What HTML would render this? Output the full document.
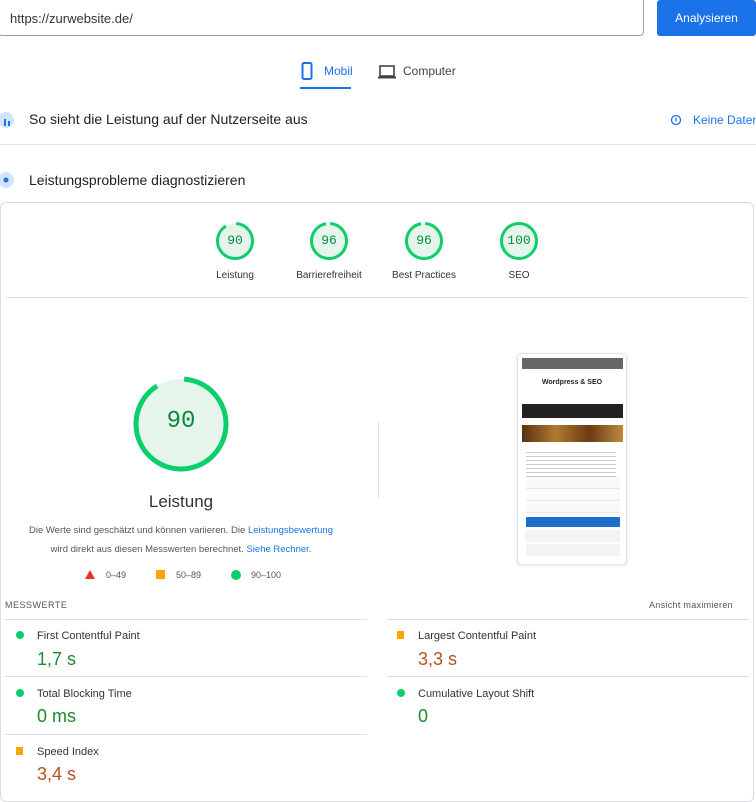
<!DOCTYPE html>
<html><head><meta charset="utf-8"><style>
*{box-sizing:border-box;margin:0;padding:0}
body{width:756px;height:779px;overflow:hidden;background:#fff;font-family:"Liberation Sans",sans-serif;color:#202124;position:relative}
.a{position:absolute;white-space:nowrap}
.mono{font-family:"Liberation Mono",monospace}
.lbl{font-size:11px;color:#333;transform:translateX(-50%)}
.m{font-size:11px;color:#333}
.v{font-size:18px}
.hr{height:1px;background:#e0e0e0}
</style></head><body>
<div class="a" style="left:-2px;top:-4px;width:646px;height:40px;border:1px solid #9aa0a6;border-radius:4px"></div>
<div class="a" style="left:10px;top:11px;font-size:13px;color:#333">https://zurwebsite.de/</div>
<div class="a" style="left:657px;top:0;width:99px;height:36px;background:#1a73e8;border-radius:3px;color:#fff;font-size:12px;line-height:36px;text-align:center">Analysieren</div>

<svg class="a" style="left:301px;top:62px" width="12" height="18"><rect x="1.5" y="1" width="9" height="16" rx="1.5" fill="none" stroke="#1a73e8" stroke-width="2"/></svg>
<div class="a" style="left:324px;top:64px;font-size:12px;color:#1a73e8">Mobil</div>
<div class="a" style="left:300px;top:87px;width:51px;height:2px;background:#1a73e8"></div>
<svg class="a" style="left:378px;top:65px" width="18" height="14"><rect x="2" y="1" width="14" height="10" fill="none" stroke="#444" stroke-width="1.6"/><rect x="0" y="11.5" width="18" height="2" fill="#444"/></svg>
<div class="a" style="left:403px;top:64px;font-size:12px;color:#444">Computer</div>

<svg class="a" style="left:0;top:110px" width="16" height="20"><circle cx="6" cy="10" r="8" fill="#d2e3fc"/><rect x="4" y="9" width="2" height="7" fill="#1a73e8"/><rect x="8" y="11" width="2" height="5" fill="#1a73e8"/></svg>
<div class="a" style="left:29px;top:111px;font-size:14px;color:#202124">So sieht die Leistung auf der Nutzerseite aus</div>
<svg class="a" style="left:670px;top:114px" width="12" height="12"><circle cx="6" cy="6" r="4.5" fill="none" stroke="#1a73e8" stroke-width="1.3"/><rect x="5.4" y="3.5" width="1.3" height="4" fill="#1a73e8"/></svg>
<div class="a" style="left:693px;top:113px;font-size:12px;color:#1a73e8">Keine Daten</div>
<div class="a hr" style="left:0;top:144px;width:756px"></div>

<svg class="a" style="left:0;top:170px" width="16" height="20"><circle cx="6" cy="10" r="8" fill="#d2e3fc"/><circle cx="6" cy="10" r="2.5" fill="#1a73e8"/></svg>
<div class="a" style="left:29px;top:172px;font-size:14px;color:#202124">Leistungsprobleme diagnostizieren</div>

<div class="a" style="left:0;top:202px;width:754px;height:600px;border:1px solid #dadce0;border-radius:6px"></div>

<svg class="a" style="left:0;top:0" width="756" height="600">
<g fill="#e6f5ec" stroke="#0cce6b" stroke-width="3">
<circle cx="235" cy="241" r="17.5" stroke-dasharray="99 111" transform="rotate(-86 235 241)"/>
<circle cx="329" cy="241" r="17.5" stroke-dasharray="105.5 111" transform="rotate(-86 329 241)"/>
<circle cx="424" cy="241" r="17.5" stroke-dasharray="105.5 111" transform="rotate(-86 424 241)"/>
<circle cx="519" cy="241" r="17.5"/>
</g>
<circle cx="181" cy="424" r="45" fill="#e6f5ec" stroke="#0cce6b" stroke-width="5" stroke-dasharray="254 283" transform="rotate(-86 181 424)"/>
</svg>
<div class="a mono" style="left:223px;top:233px;width:24px;text-align:center;font-size:13px;color:#0a8a3c">90</div>
<div class="a mono" style="left:317px;top:233px;width:24px;text-align:center;font-size:13px;color:#0a8a3c">96</div>
<div class="a mono" style="left:412px;top:233px;width:24px;text-align:center;font-size:13px;color:#0a8a3c">96</div>
<div class="a mono" style="left:503px;top:233px;width:32px;text-align:center;font-size:13px;color:#0a8a3c">100</div>
<div class="a lbl" style="left:235px;top:270px;font-size:10px">Leistung</div>
<div class="a lbl" style="left:329px;top:270px;font-size:10px">Barrierefreiheit</div>
<div class="a lbl" style="left:424px;top:270px;font-size:10px">Best Practices</div>
<div class="a lbl" style="left:519px;top:270px;font-size:10px">SEO</div>
<div class="a hr" style="left:6px;top:297px;width:742px"></div>

<div class="a mono" style="left:141px;top:408px;width:80px;text-align:center;font-size:24px;color:#0a8a3c">90</div>
<div class="a" style="left:121px;top:492px;width:120px;text-align:center;font-size:17px;color:#333">Leistung</div>
<div class="a" style="left:0;top:521px;width:362px;text-align:center;font-size:9.5px;color:#555;line-height:19px">Die Werte sind geschätzt und können variieren. Die <span style="color:#1a73e8">Leistungsbewertung</span><br>wird direkt aus diesen Messwerten berechnet. <span style="color:#1a73e8">Siehe Rechner.</span></div>
<svg class="a" style="left:85px;top:570px" width="10" height="9"><polygon points="5,0 10,9 0,9" fill="#e8332a"/></svg>
<div class="a" style="left:106px;top:570px;font-size:9px;color:#555">0–49</div>
<div class="a" style="left:156px;top:570px;width:9px;height:9px;background:#ffa400"></div>
<div class="a" style="left:176px;top:570px;font-size:9px;color:#555">50–89</div>
<div class="a" style="left:231px;top:570px;width:10px;height:10px;border-radius:50%;background:#0cce6b"></div>
<div class="a" style="left:251px;top:570px;font-size:9px;color:#555">90–100</div>
<div class="a" style="left:378px;top:422px;width:1px;height:76px;background:#ddd"></div>

<div class="a" style="left:517px;top:353px;width:110px;height:212px;border:1px solid #e3e3e3;border-radius:4px;box-shadow:0 1px 3px rgba(0,0,0,.1);background:#fff;overflow:hidden">
<div class="a" style="left:4px;top:4px;width:101px;height:11px;background:#666"></div>
<div class="a" style="left:0;top:25px;width:108px;text-align:center;font-size:7px;font-weight:bold;color:#222">Wordpress &amp; SEO</div>
<div class="a" style="left:4px;top:50px;width:101px;height:14px;background:#222"></div>
<div class="a" style="left:4px;top:71px;width:101px;height:17px;background:linear-gradient(90deg,#5a3010,#b07a30,#6b3a14,#c08a40)"></div>
<div class="a" style="left:8px;top:95px;width:90px;height:28px;background:repeating-linear-gradient(#fff 0 3px,#ccc 3px 4px)"></div>
<div class="a" style="left:8px;top:123px;width:94px;height:40px;background:repeating-linear-gradient(#fafafa 0 11px,#e8e8e8 11px 12px)"></div>
<div class="a" style="left:8px;top:163px;width:94px;height:10px;background:#1a6fc8;border-radius:1px"></div>
<div class="a" style="left:8px;top:176px;width:94px;height:12px;background:#f3f3f3"></div>
<div class="a" style="left:8px;top:190px;width:94px;height:12px;background:#f3f3f3"></div>
</div>

<div class="a" style="left:5px;top:600px;font-size:9px;color:#555;letter-spacing:.5px">MESSWERTE</div>
<div class="a" style="left:649px;top:600px;font-size:9px;color:#555;letter-spacing:.3px">Ansicht maximieren</div>
<div class="a hr" style="left:5px;top:619px;width:362px"></div>
<div class="a hr" style="left:387px;top:619px;width:362px"></div>
<div class="a hr" style="left:5px;top:676px;width:362px"></div>
<div class="a hr" style="left:387px;top:676px;width:362px"></div>
<div class="a hr" style="left:5px;top:734px;width:362px"></div>

<div class="a" style="left:16px;top:631px;width:8px;height:8px;border-radius:50%;background:#0cce6b"></div>
<div class="a m" style="left:37px;top:630px">First Contentful Paint</div>
<div class="a v" style="left:37px;top:649px;color:#1e8a2e">1,7 s</div>
<div class="a" style="left:397px;top:631px;width:7px;height:8px;background:#ffa400"></div>
<div class="a m" style="left:418px;top:630px">Largest Contentful Paint</div>
<div class="a v" style="left:418px;top:649px;color:#b5501c">3,3 s</div>
<div class="a" style="left:16px;top:689px;width:8px;height:8px;border-radius:50%;background:#0cce6b"></div>
<div class="a m" style="left:37px;top:688px">Total Blocking Time</div>
<div class="a v" style="left:37px;top:706px;color:#1e8a2e">0 ms</div>
<div class="a" style="left:397px;top:689px;width:8px;height:8px;border-radius:50%;background:#0cce6b"></div>
<div class="a m" style="left:418px;top:688px">Cumulative Layout Shift</div>
<div class="a v" style="left:418px;top:706px;color:#1e8a2e">0</div>
<div class="a" style="left:16px;top:747px;width:7px;height:8px;background:#ffa400"></div>
<div class="a m" style="left:37px;top:746px">Speed Index</div>
<div class="a v" style="left:37px;top:764px;color:#b5501c">3,4 s</div>
</body></html>
